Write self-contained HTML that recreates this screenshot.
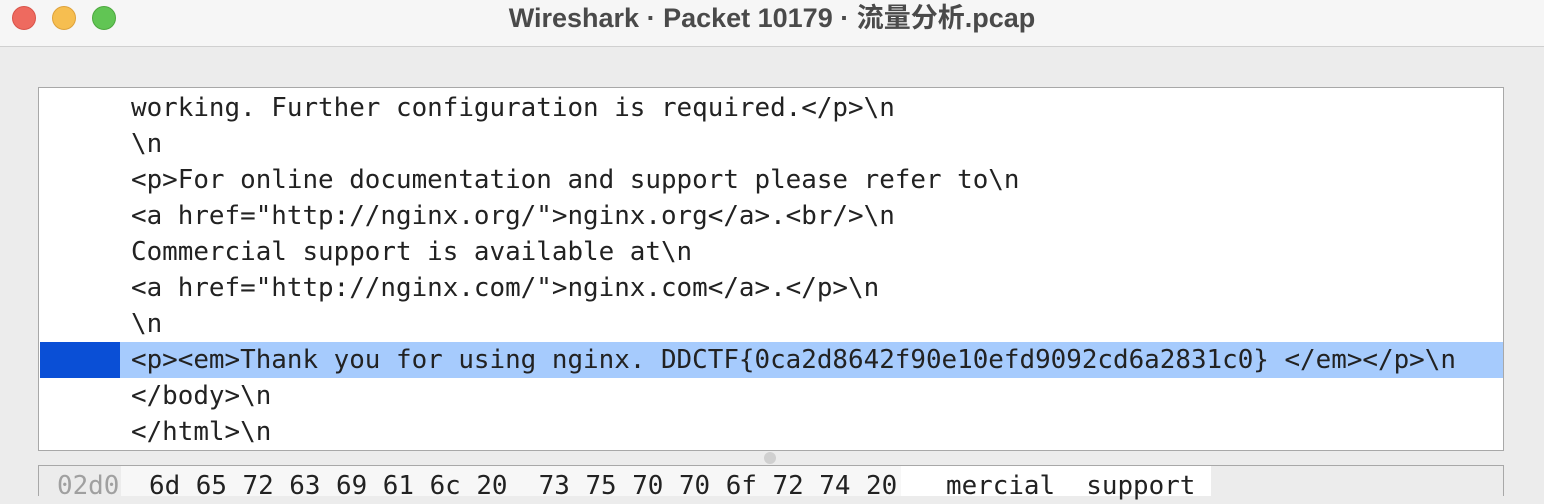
<!DOCTYPE html>
<html><head><meta charset="utf-8"><style>
html,body{margin:0;padding:0;width:1544px;height:488px;overflow:hidden;background:#ececec;font-family:"Liberation Sans","Noto Sans CJK SC",sans-serif}
.tb{position:absolute;left:0;top:0;width:1544px;height:46px;background:#f6f6f6;border-bottom:1px solid #d0d0d0}
.dot{position:absolute;top:6px;width:24px;height:24px;border-radius:50%}
.title{position:absolute;left:0;right:0;top:0px;text-align:center;font-size:27px;font-weight:bold;color:#4a4a4a;line-height:36px}
.pane{position:absolute;left:38px;top:87px;width:1464px;height:362px;background:#fff;border:1px solid #a8a8a8}
.ln{position:absolute;left:92px;font-family:"DejaVu Sans Mono","Liberation Mono",monospace;font-size:25.9px;line-height:36px;color:#222;white-space:pre}
.hl{position:absolute;left:1px;top:254px;width:1463px;height:36px;background:#a6cbfd}
.hlb{position:absolute;left:1px;top:254px;width:80px;height:36px;background:#0a4fd6}
.bp{position:absolute;left:38px;top:465px;width:1464px;height:30px;background:#ececec;border-top:1px solid #a8a8a8;border-left:1px solid #a8a8a8;border-right:1px solid #a8a8a8}
.mono{position:absolute;font-family:"DejaVu Sans Mono","Liberation Mono",monospace;font-size:25.9px;line-height:36px;white-space:pre;top:2px}
</style></head><body>
<div class="tb">
<div class="dot" style="left:12px;background:#ee6a5f;border:1px solid #d9544a;width:22px;height:22px"></div>
<div class="dot" style="left:52px;background:#f6be50;border:1px solid #dea23b;width:22px;height:22px"></div>
<div class="dot" style="left:92px;background:#61c554;border:1px solid #4da83f;width:22px;height:22px"></div>
<div class="title">Wireshark · Packet 10179 · 流量分析.pcap</div>
</div>
<div class="pane">
<div class="hl"></div><div class="hlb"></div>
<div class="ln" style="top:2px">working. Further configuration is required.&lt;/p&gt;\n</div>
<div class="ln" style="top:38px">\n</div>
<div class="ln" style="top:74px">&lt;p&gt;For online documentation and support please refer to\n</div>
<div class="ln" style="top:110px">&lt;a href="http://nginx.org/"&gt;nginx.org&lt;/a&gt;.&lt;br/&gt;\n</div>
<div class="ln" style="top:146px">Commercial support is available at\n</div>
<div class="ln" style="top:182px">&lt;a href="http://nginx.com/"&gt;nginx.com&lt;/a&gt;.&lt;/p&gt;\n</div>
<div class="ln" style="top:218px">\n</div>
<div class="ln" style="top:254px">&lt;p&gt;&lt;em&gt;Thank you for using nginx. DDCTF{0ca2d8642f90e10efd9092cd6a2831c0} &lt;/em&gt;&lt;/p&gt;\n</div>
<div class="ln" style="top:290px">&lt;/body&gt;\n</div>
<div class="ln" style="top:326px">&lt;/html&gt;\n</div>
</div>
<div style="position:absolute;left:764px;top:452px;width:12px;height:12px;border-radius:50%;background:#d0d0d0"></div>
<div class="bp">
<div style="position:absolute;left:82px;top:0;width:1090px;height:30px;background:#f7f7f7"></div>
<div style="position:absolute;left:862px;top:0;width:310px;height:30px;background:#fff"></div>
<div class="mono" style="left:18px;color:#a0a0a0">02d0</div>
<div class="mono" style="left:110px;color:#222">6d 65 72 63 69 61 6c 20  73 75 70 70 6f 72 74 20</div>
<div class="mono" style="left:907px;color:#222">mercial  support</div>
</div>
</body></html>
